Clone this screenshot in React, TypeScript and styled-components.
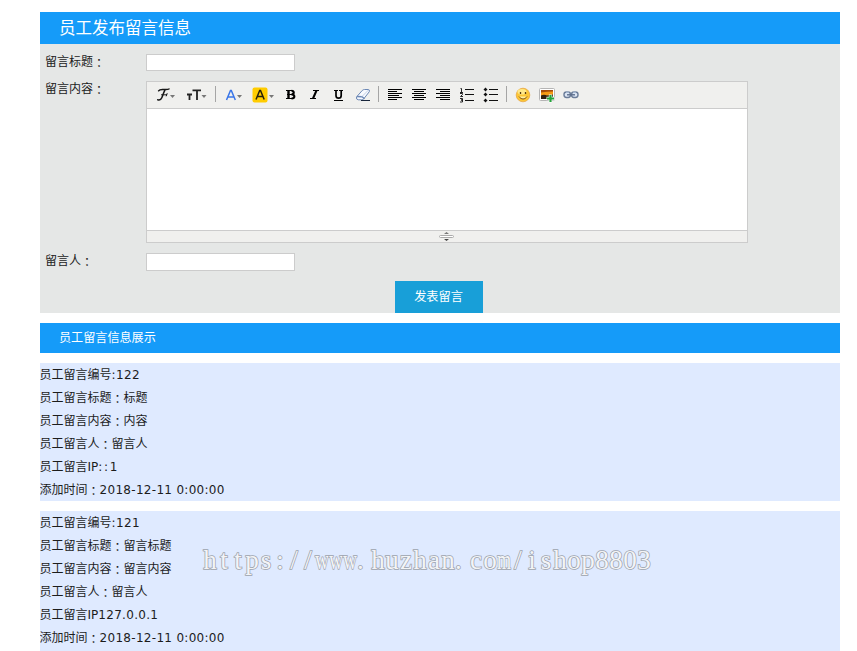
import React from "react";
import styled, { createGlobalStyle } from "styled-components";

const GlobalStyle = createGlobalStyle`
  * { box-sizing: border-box; }
  body {
    margin: 0;
    background: #fff;
    color: #1c1c1c;
    font: 12px/23px "DejaVu Sans", "Noto Sans CJK SC", sans-serif;
    overflow: hidden;
  }
`;

const Page = styled.main`
  width: 800px;
  height: 651px;
  margin-left: 40px;
  padding-top: 12px;
  overflow: hidden;
`;

const Banner = styled.h1<{ $large?: boolean }>`
  margin: ${(p) => (p.$large ? "0" : "10px 0")};
  padding-left: 19px;
  height: ${(p) => (p.$large ? 32 : 30)}px;
  background: #159bf9;
  color: #fff;
  font-family: "Noto Sans CJK SC", sans-serif;
  font-size: ${(p) => (p.$large ? "16.5px" : "12.1px")};
  font-weight: 400;
  line-height: ${(p) => (p.$large ? 30 : 27)}px;
`;

const Form = styled.form`
  display: flex;
  flex-direction: column;
  height: 269px;
  padding-top: 10px;
  background: #e5e7e6;
`;

const Field = styled.div<{ $height: number }>`
  display: flex;
  align-items: flex-start;
  height: ${(p) => p.$height}px;
`;

const FieldLabel = styled.label`
  width: 106px;
  padding-left: 5px;
  line-height: 17px;
`;

const WideColon = styled.span`
  position: relative;
  top: 2px;
  font-family: "Noto Sans CJK TC", sans-serif;
  line-height: 0;
`;

const TextInput = styled.input<{ $height: number }>`
  width: 149px;
  height: ${(p) => p.$height}px;
  padding: 0 2px;
  border: 1px solid #ccc;
  background: #fff;
`;

const Editor = styled.div`
  display: flex;
  flex-direction: column;
  width: 602px;
  height: 162px;
  border: 1px solid #ccc;
  background: #fff;
`;

const Toolbar = styled.div`
  height: 27px;
  border-bottom: 1px solid #ccc;
  background: #f0f0ee;
`;

const EditArea = styled.div`
  flex: 1;
`;

const StatusBar = styled.div`
  display: flex;
  justify-content: center;
  height: 12px;
  padding-right: 2px;
  border-top: 1px solid #ccc;
  background: #f0f0ee;
`;

const Submit = styled.button`
  width: 88px;
  height: 32px;
  margin-left: 355px;
  padding: 0 1px 2px 0;
  border: 0;
  background: #189fd8;
  color: #fff;
  font: 12.2px/30px "Noto Sans CJK SC", sans-serif;
`;

const Message = styled.article`
  height: 138px;
  margin-bottom: 10px;
  padding-top: 1px;
  background: #dfeaff;

  &:last-of-type { height: 140px; }
`;

const Line = styled.div`
  height: 23px;
  margin-left: -0.5px;
  white-space: pre;
`;

const Latin = styled.span<{ $spacing: number }>`
  letter-spacing: ${(p) => p.$spacing}px;
`;

const Watermark = styled.div`
  position: absolute;
  left: 203px;
  top: 543px;
  display: flex;
  color: #f3f4f6;
  font: 27px/34px "Liberation Serif", serif;
  -webkit-text-stroke: 1.5px #9ca2ac;
  paint-order: stroke fill;
`;

const Cell = styled.span<{ $squeeze: number; $start: boolean }>`
  display: flex;
  justify-content: ${(p) => (p.$start ? "flex-start" : "center")};
  width: 14px;
  transform: scaleX(${(p) => p.$squeeze});
`;

const arrow = (x: number) => <path d={`M${x} 95h5l-2.5 3z`} fill="#777" />;

const lines = (x: number, spans: number[][]) =>
  spans.map(([a, b], i) => <path key={i} d={`M${x + a} ${89.5 + i * 2}H${x + b}`} stroke="#000" />);

const ToolIcons = () => (
  <svg width="600" height="26" viewBox="147 82 600 26" display="block">
    <g stroke="#171717" fill="none" strokeLinecap="round">
      <path d="M158.6 90.8c1-1.6 3.2-1.4 5-1.3 2.3.2 4.2.3 5.4-.5M165 89.8c-1.4 2.6-2 5.2-3.2 8-.8 1.9-2.2 2.7-4.1 2" strokeWidth="1.5" />
      <path d="M161.5 94.8h5.2m.4-1.2-.8 2.3" />
    </g>
    {arrow(170)}
    <path d="M187 94.5h5M189.5 94v6" stroke="#222" strokeWidth="1.8" />
    <path d="M192.5 90.3h8.5M197 90v10" stroke="#222" strokeWidth="1.8" />
    {arrow(201.5)}
    <path d="M215.5 86v16M378.5 86v16M506.5 86v16" stroke="#a5a5a5" />
    <path d="m226.5 100 4-9.5h.8l4 9.5M228 97h6" fill="none" stroke="#3975e8" strokeWidth="1.5" />
    {arrow(237)}
    <rect x="252.5" y="87.5" width="15" height="15" rx="2" fill="#fc0" />
    <path d="m256 99.5 3.7-9h.8l3.7 9M257.4 96.5h5.4" fill="none" stroke="#24200a" strokeWidth="1.5" />
    {arrow(269)}
    <g fill="none" stroke="#000">
      <path d="M286 90.5h6M286 98.5h6M287 94.5h5" />
      <path d="M288.5 90v9" strokeWidth="2.4" />
      <path d="M291.5 90.8c3 .1 3 3.5 0 3.7 3.8 0 3.8 4 0 4" strokeWidth="2.1" />
      <path d="M313 90.5h6M310 98.5h6" />
      <path d="m316.5 90.5-3.5 8" strokeWidth="2" />
      <path d="M334 90.5h4M339 90.5h4M334 100.5h9" />
      <path d="M336 90v5.5c0 3.6 5.2 3.6 5.2 0V90" strokeWidth="1.7" />
    </g>
    <path d="m356.5 97 5.7-6.5q1-1 2.3-1h3.5q2 0 1.3 2.2l-5.5 7.1q-.8 1-2 1h-3.6q-2.2-.2-1.7-2.8z" fill="#f8faff" stroke="#6c88b5" />
    <path d="m357 96.5 5 .3 2.5 2" stroke="#6c88b5" strokeWidth="1.4" fill="none" />
    <path d="m362 96.5 6.5-6.5" stroke="#c3d0e6" fill="none" />
    <path d="M361 100.5h9" stroke="#18263b" />
    {lines(388, [[0, 14], [0, 9], [0, 14], [0, 11], [0, 14], [0, 9]])}
    {lines(412, [[0, 14], [2, 12], [0, 14], [2, 12], [0, 14], [2, 12]])}
    {lines(436, [[0, 14], [4, 14], [0, 14], [4, 14], [0, 14], [4, 14]])}
    <g stroke="#111" fill="none">
      <path d="M465 89.5h9M465 94.5h9M465 100.5h9" />
      <path d="M460.5 88.5h1v4m-1.5 0h3M460 93.5h2.5v1l-2 2h2.5M460 98.5h2.5v1.5h-1.5 1.5v2H460" strokeWidth=".9" />
      <path d="M489 89.5h9M489 94.5h9M489 100.5h9" />
    </g>
    <path d="M485 88h1v1h1v1h-1v1h-1v-1h-1v-1h1zM485 93h1v1h1v1h-1v1h-1v-1h-1v-1h1zM485 99h1v1h1v1h-1v1h-1v-1h-1v-1h1z" fill="#111" stroke="#111" strokeWidth=".5" />
    <circle cx="523" cy="95" r="6.8" fill="#fcc636" stroke="#e6a23b" strokeWidth=".7" />
    <ellipse cx="522" cy="91.8" rx="4.5" ry="2.8" fill="#ffe889" />
    <path d="M520.5 92v2M525.5 92v2" stroke="#573a13" strokeWidth="1.3" />
    <path d="M519 96.5c2.1 3.3 6 3.3 8 0" stroke="#81500c" fill="#fff0a0" />
    <rect x="539.5" y="88.5" width="15" height="12" rx="1" fill="#fff" stroke="#b5b5b5" />
    <path d="M541 90h12v9h-12z" fill="#f49a14" />
    <path d="M541 90h12v1.5q-6 0-12 1z" fill="#a54c0b" />
    <path d="M541 95.5q3-1.5 6 0l6-1v4.5h-12z" fill="#302010" />
    <path d="M550.5 94.5v8M546.5 98.5h8" stroke="#fff" strokeWidth="3.4" />
    <path d="M550.5 95v7M547 98.5h7" stroke="#24a33b" strokeWidth="2.2" />
    <g fill="none" stroke="#6b7d99" strokeWidth="1.4">
      <rect x="564" y="92" width="6.5" height="5.5" rx="2.4" fill="#dbe5f4" />
      <rect x="571.5" y="92" width="6.5" height="5.5" rx="2.4" fill="#dbe5f4" />
      <path d="M567 94.8h8" stroke="#5c6e8c" />
    </g>
    <path d="M566 92.2h3M573 92.2h3" stroke="#bdd0ec" strokeWidth=".8" />
  </svg>
);

const ResizeGrip = () => (
  <svg width="16" height="11" viewBox="0 0 16 11" display="block">
    <path d="M6 3h5L8.5 1z" fill="#777" />
    <rect x="1.5" y="4.5" width="14" height="2" rx="1" fill="#fff" stroke="#aaa" />
    <path d="M6 8h5L8.5 10z" fill="#444" />
  </svg>
);

const messages = [
  { id: "122", title: "标题", body: "内容", ip: "::1" },
  { id: "121", title: "留言标题", body: "留言内容", ip: "127.0.0.1" },
];

const WATERMARK = "https://www.huzhan.com/ishop8803";
const squeezeFor = (c: string) => (c === "w" ? 0.72 : c === "m" ? 0.67 : 1);

export default function App() {
  return (
    <>
      <GlobalStyle />
      <Page>
        <Banner $large>员工发布留言信息</Banner>
        <Form>
          <Field $height={27}>
            <FieldLabel>留言标题<WideColon>：</WideColon></FieldLabel>
            <TextInput $height={17} />
          </Field>
          <Field $height={172}>
            <FieldLabel>留言内容<WideColon>：</WideColon></FieldLabel>
            <Editor>
              <Toolbar><ToolIcons /></Toolbar>
              <EditArea />
              <StatusBar><ResizeGrip /></StatusBar>
            </Editor>
          </Field>
          <Field $height={28}>
            <FieldLabel>留言人<WideColon>：</WideColon></FieldLabel>
            <TextInput $height={18} />
          </Field>
          <Submit type="button">发表留言</Submit>
        </Form>
        <Banner as="h2">员工留言信息展示</Banner>
        {messages.map((m) => (
          <Message key={m.id}>
            <Line>员工留言编号<Latin $spacing={0.4}>:{m.id}</Latin></Line>
            <Line>员工留言标题<WideColon>：</WideColon>{m.title}</Line>
            <Line>员工留言内容<WideColon>：</WideColon>{m.body}</Line>
            <Line>员工留言人<WideColon>：</WideColon>留言人</Line>
            <Line>员工留言IP<Latin $spacing={m.id === "122" ? 1.7 : 0.3}>{m.ip}</Latin></Line>
            <Line>添加时间<WideColon>：</WideColon><Latin $spacing={0.3}>2018-12-11 0:00:00</Latin></Line>
          </Message>
        ))}
      </Page>
      <Watermark>
        {WATERMARK.split("").map((c, i) => (
          <Cell key={i} $squeeze={squeezeFor(c)} $start={c === "."}>{c}</Cell>
        ))}
      </Watermark>
    </>
  );
}
